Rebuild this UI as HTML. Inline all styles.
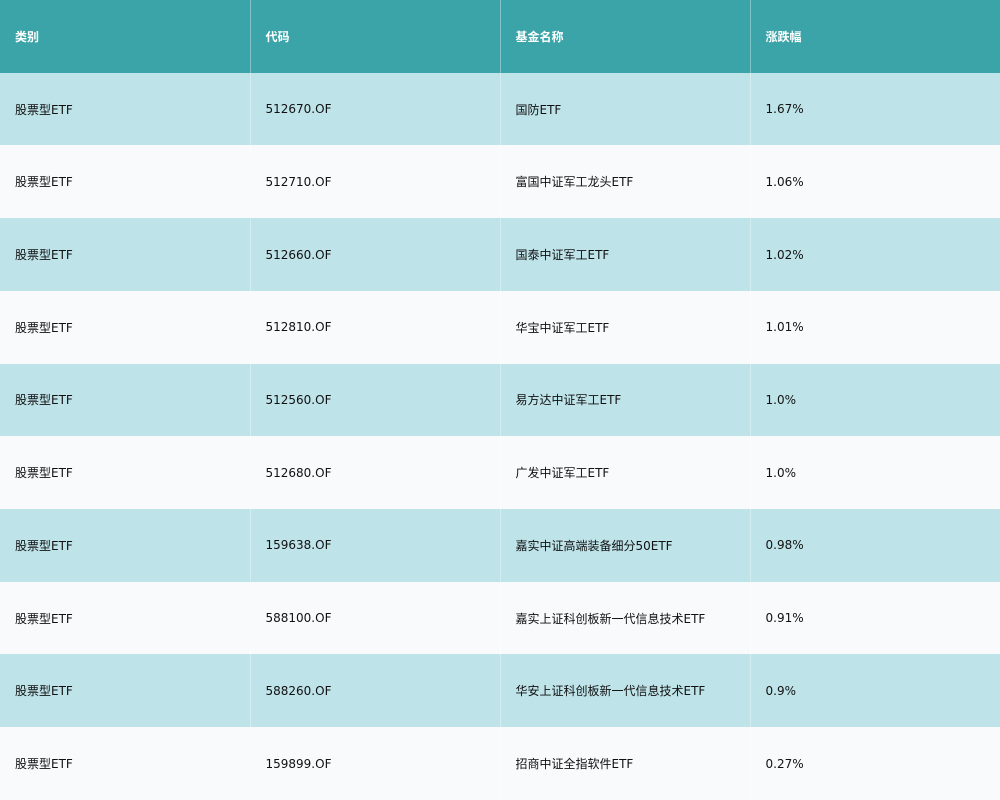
<!DOCTYPE html><html><head><meta charset="utf-8"><style>
html,body{margin:0;padding:0;width:1000px;height:800px;overflow:hidden;background:#f8fafc}
table{border-collapse:collapse;width:1000px;height:800px;table-layout:fixed;font-family:"DejaVu Sans","Noto Sans CJK SC",sans-serif;font-size:12px;color:#111}
td,th{padding:0 0 0 15px;text-align:left;border-left:1px solid rgba(255,255,255,0.35);height:72.7px}
td:first-child,th:first-child{border-left:none}
th{background:#3ba4a8;color:#fff;font-weight:bold}
tr:nth-child(even) td{background:#bee3e9}
tr:nth-child(odd) td{background:#f8fafc}
</style></head><body><table>
<tr><th>类别</th><th>代码</th><th>基金名称</th><th>涨跌幅</th></tr>
<tr><td>股票型ETF</td><td>512670.OF</td><td>国防ETF</td><td>1.67%</td></tr>
<tr><td>股票型ETF</td><td>512710.OF</td><td>富国中证军工龙头ETF</td><td>1.06%</td></tr>
<tr><td>股票型ETF</td><td>512660.OF</td><td>国泰中证军工ETF</td><td>1.02%</td></tr>
<tr><td>股票型ETF</td><td>512810.OF</td><td>华宝中证军工ETF</td><td>1.01%</td></tr>
<tr><td>股票型ETF</td><td>512560.OF</td><td>易方达中证军工ETF</td><td>1.0%</td></tr>
<tr><td>股票型ETF</td><td>512680.OF</td><td>广发中证军工ETF</td><td>1.0%</td></tr>
<tr><td>股票型ETF</td><td>159638.OF</td><td>嘉实中证高端装备细分50ETF</td><td>0.98%</td></tr>
<tr><td>股票型ETF</td><td>588100.OF</td><td>嘉实上证科创板新一代信息技术ETF</td><td>0.91%</td></tr>
<tr><td>股票型ETF</td><td>588260.OF</td><td>华安上证科创板新一代信息技术ETF</td><td>0.9%</td></tr>
<tr><td>股票型ETF</td><td>159899.OF</td><td>招商中证全指软件ETF</td><td>0.27%</td></tr>
</table></body></html>
